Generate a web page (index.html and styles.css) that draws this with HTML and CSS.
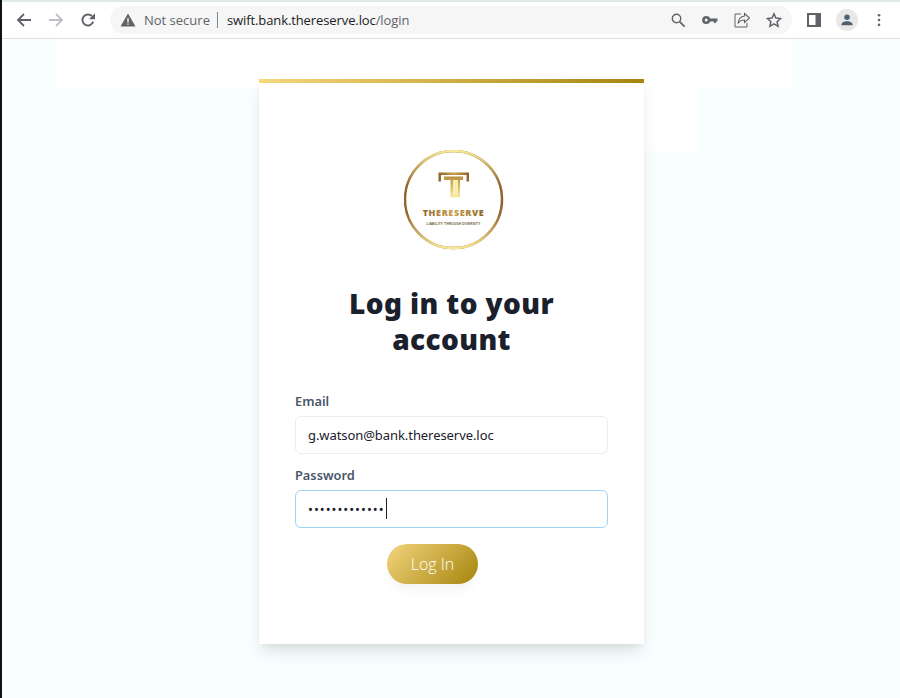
FILE: index.html
```html
<!DOCTYPE html>
<html lang="en">
<head>
  <meta charset="UTF-8" />
  <meta name="viewport" content="width=device-width, initial-scale=1.0" />
  <title>Log in to your account</title>
  <link rel="stylesheet" href="styles.css">
</head>
<body>
  <header class="toolbar">
    <svg class="nav-icon" viewBox="0 0 16 16"><path d="M15 8H2.500M8 2 2 8l6 6" fill="none" stroke="#5f6368" stroke-width="1.800"/></svg>
    <svg class="nav-icon" viewBox="0 0 16 16"><path d="M1 8h12.500M8 2l6 6-6 6" fill="none" stroke="#bdc1c6" stroke-width="1.800"/></svg>
    <svg class="nav-icon" viewBox="0 0 16 16"><path d="M13.200 9.600A5.500 5.500 0 1 1 12 4.200" fill="none" stroke="#5f6368" stroke-width="1.900"/><path d="M15 1.200v6h-6z" fill="#5f6368"/></svg>
    <div class="omnibox">
      <svg class="warn" viewBox="0 0 16 16"><path d="M8 1.500 15.500 14.500H.5z" fill="#5f6368"/><path d="M7.300 6h1.400v4.600H7.300zM7.300 11.400h1.400v1.400H7.300z" fill="#f6f6f6"/></svg>
      <span class="not-secure">Not secure</span>
      <span class="divider"></span>
      <span class="url">swift.bank.thereserve.loc<span class="url-path">/login</span></span>
      <span class="omni-actions">
        <svg viewBox="0 0 16 16"><circle cx="6.500" cy="6.500" r="4.200" fill="none" stroke="#5f6368" stroke-width="1.400"/><path d="m9.600 9.600 5 5" stroke="#5f6368" stroke-width="1.600"/></svg>
        <svg viewBox="0 0 16 16"><circle cx="4.200" cy="8" r="2.800" fill="none" stroke="#5f6368" stroke-width="2.600"/><path d="M7 6.500h8.500v3h-1.600v1.600h-2V9.500H7z" fill="#5f6368"/></svg>
        <svg viewBox="0 0 16 16"><path d="M7 2H1v13h12v-4" fill="none" stroke="#5f6368" stroke-width="1"/><path d="M10.500 1.500 15.500 6l-5 4.500V8C7.500 8 5.500 9 4 11.500 4.500 7.500 6.500 4.500 10.500 4z" fill="none" stroke="#5f6368" stroke-width="1.100"/></svg>
        <svg viewBox="0 0 16 16"><path d="m8 1.800 1.900 4.300 4.700.5-3.500 3.100 1 4.600L8 11.900l-4.100 2.400 1-4.600L1.400 6.600l4.700-.5z" fill="none" stroke="#5f6368" stroke-width="1.500"/></svg>
      </span>
    </div>
    <svg class="panel-icon" viewBox="0 0 14 14"><path d="M0 0h14v14H0z" fill="#5f6368"/><path d="M2 2h6.500v10H2z" fill="#fff"/></svg>
    <span class="avatar">
      <svg viewBox="0 0 16 16"><circle cx="8" cy="4.800" r="3.100" fill="#4f6170"/><path d="M1.500 14c0-3.200 3.200-4.500 6.500-4.500s6.500 1.300 6.500 4.500z" fill="#4f6170"/></svg>
    </span>
    <svg class="dots" viewBox="0 0 4 16"><circle cx="2" cy="2.500" r="1.500" fill="#5f6368"/><circle cx="2" cy="8" r="1.500" fill="#5f6368"/><circle cx="2" cy="13.500" r="1.500" fill="#5f6368"/></svg>
  </header>

  <main class="page">
    <div class="patch patch-wide"></div>
    <div class="patch patch-small"></div>

    <section class="card">
      <svg class="logo" viewBox="0 0 100 100">
        <defs>
          <linearGradient id="gold" x1="0" y1="0.500" x2="1" y2="0.500">
            <stop offset="0" stop-color="#8f6228"/>
            <stop offset="0.500" stop-color="#c9a04a"/>
            <stop offset="1" stop-color="#8f6228"/>
          </linearGradient>
          <linearGradient id="stem" x1="0" y1="0" x2="0" y2="1">
            <stop offset="0" stop-color="#b98d3c"/>
            <stop offset="1" stop-color="#f8eba0"/>
          </linearGradient>
          <linearGradient id="shine" x1="0.500" y1="0" x2="0.500" y2="1">
            <stop offset="0" stop-color="#f8e998"/>
            <stop offset="0.350" stop-color="#f8e998" stop-opacity="0"/>
            <stop offset="0.650" stop-color="#f8e998" stop-opacity="0"/>
            <stop offset="1" stop-color="#f8e998"/>
          </linearGradient>
        </defs>
        <circle cx="49.500" cy="49.500" r="48.500" fill="#fff" stroke="#93642a" stroke-width="2.500"/>
        <circle cx="49.500" cy="49.500" r="48.500" fill="none" stroke="url(#shine)" stroke-width="2.500"/>
        <path d="M34.500 22.500h30.500v9h-2.500v-6.500h-25.500v6.500h-2.500z" fill="url(#gold)"/>
        <path d="M40 26.500h19v3.500h-3v17.500h-9.500V30h-6.500z" fill="url(#stem)"/>
        <path d="M49 30h5v15.500h-5z" fill="#f8eeb4"/>
        <text class="logo-name" x="49.500" y="66" text-anchor="middle" fill="url(#gold)">THERESERVE</text>
        <text class="logo-tag" x="49.500" y="74.500" text-anchor="middle">LIABILITY THROUGH DIVERSITY</text>
      </svg>

      <h1 class="title">Log in to your account</h1>

      <form class="login-form">
        <label class="field-label" for="email">Email</label>
        <input class="field" id="email" type="text" value="g.watson@bank.thereserve.loc">
        <label class="field-label" for="password">Password</label>
        <div class="password-wrap">
          <input class="field field-focus" id="password" type="password" value="Password12345">
          <span class="caret"></span>
        </div>
        <button class="login-btn" type="button">Log In</button>
      </form>
    </section>
  </main>
</body>
</html>
```

FILE: styles.css
```css
* {
  box-sizing: border-box;
}
html, body {
  margin: 0;
  height: 100%;
}
body {
  font-family: "Noto Sans", sans-serif;
  background-color: #f8fffe;
  border-left: 2px solid #111;
  overflow: hidden;
  display: flex;
  flex-direction: column;
}

/* browser chrome */
.toolbar {
  height: 39px;
  flex: none;
  display: flex;
  align-items: center;
  background: #fff;
  border-top: 2px solid #dfe9ea;
  border-bottom: 1px solid #dedede;
  padding: 0 0 0 14px;
}
.nav-icon {
  width: 16px;
  height: 16px;
  margin-right: 16px;
  flex: none;
}
.omnibox {
  width: 682px;
  height: 28px;
  margin-left: -2px;
  background: #f6f6f6;
  border-radius: 14px;
  display: flex;
  align-items: center;
  padding-left: 10px;
  font-family: "Open Sans", sans-serif;
  font-size: 13px;
}
.warn {
  width: 16px;
  height: 16px;
  flex: none;
}
.not-secure {
  margin-left: 8px;
  color: #5f6368;
}
.divider {
  width: 1px;
  height: 16px;
  background: #80868b;
  margin: 0 9px 0 7px;
}
.url {
  color: #202124;
  letter-spacing: -0.100px;
}
.url-path {
  color: #5f6368;
}
.omni-actions {
  margin-left: auto;
  display: flex;
  gap: 16px;
  padding-right: 10px;
}
.omni-actions svg {
  width: 16px;
  height: 16px;
}
.panel-icon {
  width: 14px;
  height: 14px;
  margin-left: 15px;
}
.avatar {
  width: 22px;
  height: 22px;
  border-radius: 50%;
  background: #e8e8e8;
  margin-left: 15px;
  display: flex;
  align-items: center;
  justify-content: center;
}
.avatar svg {
  width: 14px;
  height: 14px;
}
.dots {
  width: 4px;
  height: 14px;
  margin-left: 19px;
}

/* page */
.page {
  flex: 1;
  position: relative;
  display: flex;
  justify-content: center;
  align-items: flex-start;
  padding: 40px 0 0 1px;
}
.patch {
  position: absolute;
  background: #fff;
}
.patch-wide {
  left: 55px;
  top: 0;
  width: 735px;
  height: 48px;
}
.patch-small {
  left: 600px;
  top: 48px;
  width: 96px;
  height: 64px;
}
.card {
  position: relative;
  width: 385px;
  height: 565px;
  background: #fff;
  border-image: linear-gradient(90deg, #f5d77f, #a5850c) 1;
  border-width: 4px 0 0;
  border-style: solid;
  box-shadow: 0 10px 15px -3px rgba(40, 60, 60, 0.14), 0 4px 6px -2px rgba(40, 60, 60, 0.05);
  padding: 67px 36px 0;
  display: flex;
  flex-direction: column;
}
.logo {
  width: 100px;
  height: 100px;
  align-self: center;
  margin-left: 4px;
  flex: none;
}
.logo-name {
  font-family: "Open Sans", sans-serif;
  font-size: 9px;
  font-weight: 800;
  letter-spacing: 0.600px;
}
.logo-tag {
  font-family: "Liberation Sans", sans-serif;
  font-size: 3.200px;
  font-weight: 700;
  letter-spacing: 0.150px;
  fill: #6b5a36;
}
.title {
  margin: 35px 0 0;
  padding: 0 40px;
  text-align: center;
  font-family: "Noto Sans", sans-serif;
  font-size: 28px;
  font-weight: 900;
  line-height: 36px;
  letter-spacing: 0.400px;
  color: #1a202c;
}
.login-form {
  margin-top: 34px;
  display: flex;
  flex-direction: column;
}
.field-label {
  font-size: 12.800px;
  font-weight: 600;
  line-height: 20px;
  color: #4a5568;
  margin-bottom: 5px;
}
.field {
  width: 100%;
  height: 38px;
  border: 1px solid #e6eef2;
  border-radius: 6px;
  background: #fff;
  padding: 0 12px;
  font-family: "Noto Sans", sans-serif;
  font-size: 13px;
  letter-spacing: -0.070px;
  color: #1a202c;
  margin-bottom: 11px;
  display: block;
  outline: none;
}
.field-focus {
  border-color: #9dd3f3;
  letter-spacing: 1px;
}
.password-wrap {
  position: relative;
}
.caret {
  position: absolute;
  left: 91px;
  top: 8px;
  width: 1px;
  height: 21px;
  background: #1a202c;
}
.login-btn {
  align-self: flex-start;
  margin: 5px 0 0 92px;
  width: 91px;
  height: 40px;
  border: none;
  border-radius: 20px;
  background: linear-gradient(135deg, #f3d57f, #a5850c);
  box-shadow: 0 8px 10px -2px rgba(60, 70, 60, 0.06);
  color: #fff;
  font-family: "Open Sans", sans-serif;
  font-size: 16px;
  font-weight: 300;
}
```
